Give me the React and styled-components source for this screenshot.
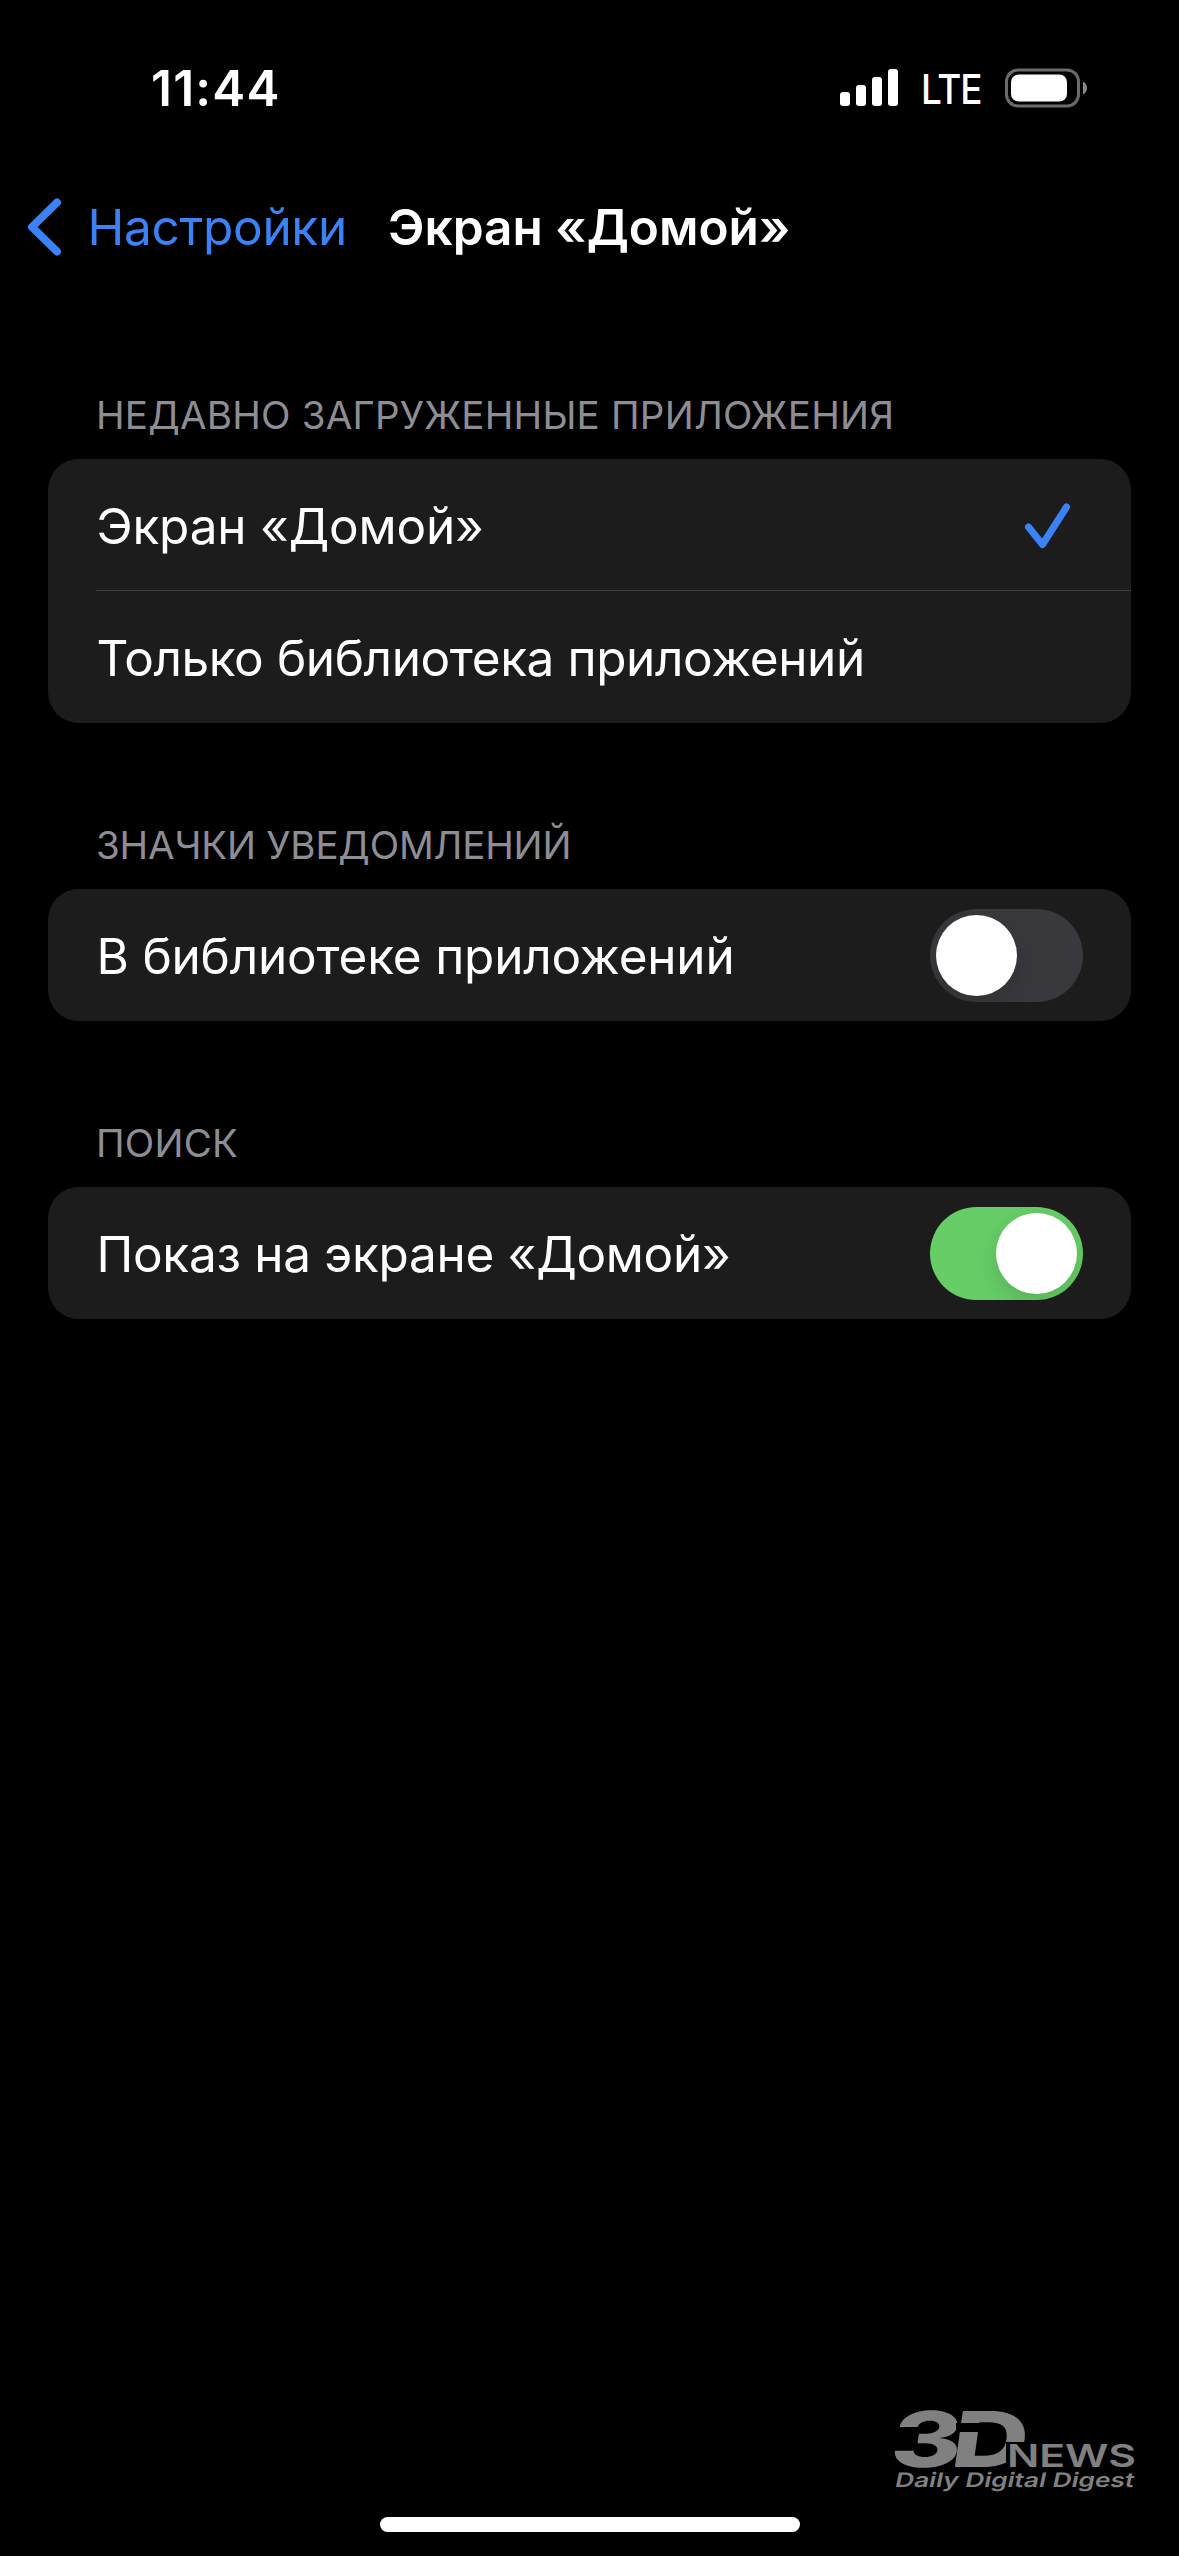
import React from 'react';
import styled, { createGlobalStyle } from 'styled-components';

const GlobalStyle = createGlobalStyle`
  * {
    box-sizing: border-box;
  }

  body {
    margin: 0;
    background: #000;
  }
`;

const Screen = styled.div`
  display: flex;
  flex-direction: column;
  width: 1179px;
  height: 2556px;
  overflow: hidden;
  background: #000;
  color: #fff;
  font-family: Inter, 'Noto Sans', sans-serif;
  white-space: nowrap;
`;

const StatusBar = styled.header`
  display: flex;
  align-items: center;
  justify-content: space-between;
  height: 176px;
  padding: 0 91px 0 151px;
`;

const Clock = styled.span`
  font-size: 49.5px;
  font-weight: 600;
  letter-spacing: 1.2px;
`;

const StatusIcons = styled.div`
  display: flex;
  align-items: center;
`;

const Network = styled.span`
  width: 60px;
  margin: 1px 23px 0 22px;
  font-size: 41px;
  font-weight: 500;
  letter-spacing: -1.2px;
  transform: scaleX(0.9);
  transform-origin: left;
`;

const NavBar = styled.nav`
  display: flex;
  align-items: center;
  height: 102px;
  padding-left: 27px;
`;

const BackLink = styled.a`
  display: flex;
  align-items: center;
  width: 361px;
  gap: 24.5px;
  color: #3b82f7;
  font-size: 49.5px;
  letter-spacing: -0.3px;
`;

const Title = styled.h1`
  margin: 0;
  font-size: 49.5px;
  font-weight: 600;
  letter-spacing: 0;
`;

const Content = styled.main`
  display: flex;
  flex: 1;
  flex-direction: column;
  gap: 102px;
  padding: 117px 48px 0;
`;

const SectionTitle = styled.h2`
  height: 40px;
  margin: 0 0 24px;
  padding-left: 48px;
  color: #8d8d93;
  font-size: 38.5px;
  font-weight: 400;
  line-height: 40px;
  letter-spacing: ${props => props.$spacing || '0.22px'};
`;

const Card = styled.div`
  overflow: hidden;
  border-radius: 31px;
  background: #1c1c1c;
`;

const Row = styled.div`
  display: flex;
  align-items: center;
  justify-content: space-between;
  height: 132px;
  margin-left: 48px;
  padding: 2px 48px 0 0.5px;
  font-size: 49.5px;
  letter-spacing: ${props => props.$spacing || '-0.2px'};
  border-bottom: ${props => (props.$divider ? '1px solid #414144' : 'none')};
`;

const Track = styled.span`
  display: flex;
  justify-content: ${props => (props.$on ? 'flex-end' : 'flex-start')};
  width: 153px;
  height: 93px;
  margin-bottom: 1px;
  padding: 6px;
  overflow: hidden;
  border-radius: 47px;
  background: ${props => (props.$on ? '#67ce67' : '#39393d')};
`;

const Knob = styled.span`
  width: 81px;
  height: 81px;
  border-radius: 50%;
  background: #fff;
  box-shadow: 0 9px 24px rgba(0, 0, 0, 0.15);
`;

const Footer = styled.footer`
  display: flex;
  flex-direction: column;
  align-items: center;
  height: 146px;
`;

const Watermark = styled.svg`
  align-self: flex-end;
  margin-right: 43px;
  overflow: visible;
  fill: #808080;
`;

const HomeIndicator = styled.div`
  width: 420px;
  height: 15px;
  margin-top: 23px;
  border-radius: 8px;
  background: #fff;
`;

const SignalIcon = () => (
  <svg width="60" height="38" viewBox="0 0 60 38" fill="#fff">
    <rect x="1" y="23" width="10" height="14" rx="3" />
    <rect x="17" y="16" width="10" height="21" rx="3" />
    <rect x="33" y="8" width="10" height="29" rx="3" />
    <rect x="49" y="0" width="10" height="37" rx="3" />
  </svg>
);

const BatteryIcon = () => (
  <svg width="84" height="40" viewBox="0 0 84 40">
    <rect x="2.5" y="2" width="72" height="36" rx="11.5" fill="none" stroke="#6b6b6b" strokeWidth="3" />
    <rect x="7" y="6.5" width="56" height="27" rx="7.5" fill="#fff" />
    <path d="M79 13.5c5.3 2.5 5.3 10.5 0 13z" fill="#8a8a8a" />
  </svg>
);

const ChevronIcon = () => (
  <svg width="36" height="58" viewBox="0 0 36 58" fill="none" stroke="currentColor" strokeWidth="8" strokeLinecap="round" strokeLinejoin="round">
    <path d="M30 4.5L5 29L30 53.5" />
  </svg>
);

const CheckIcon = () => (
  <svg width="60" height="46" viewBox="0 0 60 46" fill="none" stroke="#3b82f7" strokeWidth="7" strokeLinecap="round" strokeLinejoin="round">
    <path d="M5.5 24L19.5 41.5L43.5 4" />
  </svg>
);

const Logo = () => (
  <Watermark width="244" height="84" viewBox="0 0 244 84">
    <g fontSize="77" fontWeight="800">
      <text transform="translate(-4 57) skewX(-8)" textLength="71" lengthAdjust="spacingAndGlyphs">3</text>
      <text transform="translate(57 57) skewX(-8)" textLength="76" lengthAdjust="spacingAndGlyphs">D</text>
    </g>
    {/* notches in the mark and room for the word beside it */}
    <rect x="64" y="13" width="30" height="9" fill="#000" />
    <rect x="114" y="32" width="24" height="26" fill="#000" />
    <text x="115" y="57" fontSize="31" fontWeight="600" textLength="129" lengthAdjust="spacingAndGlyphs">NEWS</text>
    <text transform="translate(2 77) skewX(-12)" fontSize="20" fontWeight="600" textLength="239" lengthAdjust="spacingAndGlyphs">Daily Digital Digest</text>
  </Watermark>
);

const Switch = ({ on }) => (
  <Track $on={on} role="switch" aria-checked={on}>
    <Knob />
  </Track>
);

const App = () => (
  <>
    <GlobalStyle />
    <Screen>
      <StatusBar>
        <Clock>11:44</Clock>
        <StatusIcons>
          <SignalIcon />
          <Network>LTE</Network>
          <BatteryIcon />
        </StatusIcons>
      </StatusBar>

      <NavBar>
        <BackLink>
          <ChevronIcon />
          Настройки
        </BackLink>
        <Title>Экран «Домой»</Title>
      </NavBar>

      <Content>
        <section>
          <SectionTitle>НЕДАВНО ЗАГРУЖЕННЫЕ ПРИЛОЖЕНИЯ</SectionTitle>
          <Card>
            <Row $divider>
              Экран «Домой»
              <CheckIcon />
            </Row>
            <Row $spacing="-0.4px">Только библиотека приложений</Row>
          </Card>
        </section>

        <section>
          <SectionTitle $spacing="-0.18px">ЗНАЧКИ УВЕДОМЛЕНИЙ</SectionTitle>
          <Card>
            <Row>
              В библиотеке приложений
              <Switch on={false} />
            </Row>
          </Card>
        </section>

        <section>
          <SectionTitle>ПОИСК</SectionTitle>
          <Card>
            <Row $spacing="-0.3px">
              Показ на экране «Домой»
              <Switch on />
            </Row>
          </Card>
        </section>
      </Content>

      <Footer>
        <Logo />
        <HomeIndicator />
      </Footer>
    </Screen>
  </>
);

export default App;
